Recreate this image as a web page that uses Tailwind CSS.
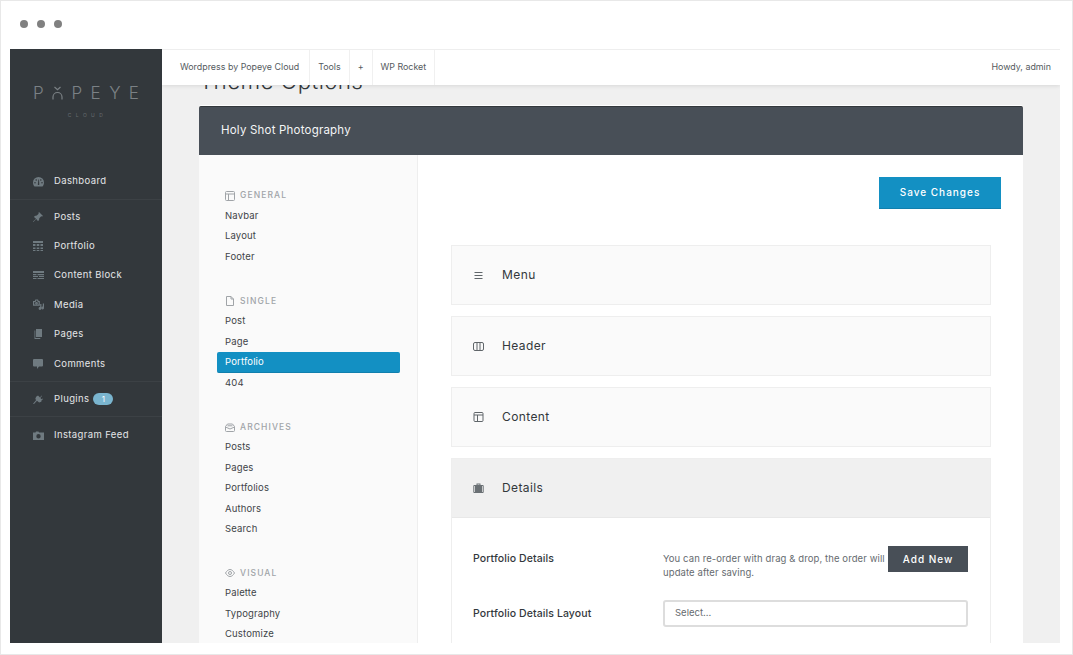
<!DOCTYPE html>
<html lang="en">
<head>
  <meta charset="UTF-8" />
  <title>Theme Options</title>
  <script src="https://cdn.jsdelivr.net/npm/@tailwindcss/browser@4"></script>
</head>
<body class="bg-white font-['Inter',sans-serif] text-[#3a3f44] antialiased">
  <div class="w-[1073px] h-[655px] border border-[#e8e8e8] overflow-hidden flex flex-col">
    <!-- window chrome -->
    <div class="h-[48px] shrink-0 flex items-center gap-[9px] pl-[19px] pb-[3px]">
      <span class="w-2 h-2 rounded-full bg-[#808080]"></span>
      <span class="w-2 h-2 rounded-full bg-[#808080]"></span>
      <span class="w-2 h-2 rounded-full bg-[#808080]"></span>
    </div>

    <div class="ml-[9px] w-[1050px] h-[594px] flex overflow-hidden">
      <!-- sidebar -->
      <aside class="w-[152px] shrink-0 bg-[#33383c] text-[#e4e6e8] text-[9.5px] font-normal tracking-[0.38px]">
        <div class="h-[114px] pt-[37px]">
          <div class="flex justify-between items-center px-[23px] h-[14px] text-[17px] leading-none font-light text-[#7b8185] tracking-normal">
            <span>P</span>
            <svg class="w-[11px] h-[14px]" viewBox="0 0 11 14" fill="none" stroke="#7b8185" stroke-width="1.2"><path d="M2.5 1l3 2.6 3-2.6M1 13.5V11a4.5 4.5 0 0 1 9 0v2.5"/></svg>
            <span>P</span><span>E</span><span>Y</span><span>E</span>
          </div>
          <div class="mt-[12px] text-center text-[5px] leading-[6px] tracking-[4.4px] text-[#666c70] pl-[3px]">CLOUD</div>
        </div>

        <div class="border-b border-[#3c4145] h-[37px] pt-[1px] flex items-center gap-[11px] pl-[23px]">
          <svg class="w-[11px] h-[10px] shrink-0" viewBox="0 0 11 10" fill="#6f7a80"><path fill-rule="evenodd" d="M5.500 0A5.500 5.500 0 0 0 0 5.500c0 1.600.6 3 1.500 4h8c.9-1 1.500-2.400 1.500-4A5.500 5.500 0 0 0 5.500 0zM2 5a.8.8 0 1 1 0 1.600A.8.8 0 0 1 2 5zm1.200-2.800a.8.8 0 1 1 0 1.600.8.8 0 0 1 0-1.600zm4.600 0a.8.8 0 1 1 0 1.600.8.8 0 0 1 0-1.600zM9 5a.8.8 0 1 1 0 1.600A.8.8 0 0 1 9 5zM4.800 7.500l.6-5h.6l.3 5a.8.8 0 0 1-1.500 0z"/></svg>
          <span class="-ml-[1px]">Dashboard</span>
        </div>

        <div class="border-b border-[#3c4145] py-[2px] h-[182px]">
          <div class="h-[29.4px] flex items-center gap-[11px] pl-[23px]">
            <svg class="w-[10px] h-[10px] shrink-0" viewBox="0 0 10 10" fill="#6f7a80"><path d="M6 0l4 4-1 .6-.8-.3L6.300 6.200 6 8.300 4.900 9 3.200 7 .4 10 0 9.600 3 6.800 1 5l.7-1.100 2.100-.3L5.700 1.800 5.400 1z"/></svg>
            <span>Posts</span>
          </div>
          <div class="h-[29.4px] flex items-center gap-[11px] pl-[23px]">
            <svg class="w-[10px] h-[10px] shrink-0" viewBox="0 0 10 10" fill="#6f7a80"><path d="M0 0h10v2H0zM0 3h2.500v2H0zM3.700 3h2.600v2H3.700zM7.500 3H10v2H7.500zM0 6.500h2.500V8H0zM3.700 6.500h2.600V8H3.700zM7.500 6.500H10V8H7.500zM0 9h2.500v1H0zM3.700 9h2.600v1H3.700zM7.500 9H10v1H7.500z"/></svg>
            <span>Portfolio</span>
          </div>
          <div class="h-[29.4px] flex items-center gap-[10px] pl-[23px]">
            <svg class="w-[11px] h-[8px] shrink-0" viewBox="0 0 11 8" fill="#6f7a80"><path d="M0 0h11v2H0zM0 3h3.500v1.200H0zM4.500 3H11v1.200H4.500zM0 5h5v1H0zM6 5h5v1H6zM0 7h3.500v1H0zM4.500 7H11v1H4.500z"/></svg>
            <span>Content Block</span>
          </div>
          <div class="h-[29.4px] flex items-center gap-[10px] pl-[23px]">
            <svg class="w-[11px] h-[11px] shrink-0" viewBox="0 0 11 11" fill="none" stroke="#6f7a80" stroke-width="1.200"><path d="M.6 2.500h1.600l.6-1.500h1.800l.6 1.500h1v3.700H.6z"/><circle cx="3.500" cy="4.300" r=".8"/><path d="M7.800 5v4.300M10.400 4.500v4.300"/><circle cx="7" cy="9.500" r=".8" fill="#6f7a80"/><circle cx="9.600" cy="9" r=".8" fill="#6f7a80"/></svg>
            <span>Media</span>
          </div>
          <div class="h-[29.4px] flex items-center gap-[11px] pl-[23px]">
            <svg class="w-[10px] h-[10px] shrink-0" viewBox="0 0 10 10" fill="#6f7a80"><path d="M3 0h6v8H3zM1.500 1.500h.8V9h5v1H1.500z"/></svg>
            <span>Pages</span>
          </div>
          <div class="h-[29.4px] flex items-center gap-[11px] pl-[23px]">
            <svg class="w-[10px] h-[10px] shrink-0" viewBox="0 0 10 10" fill="#6f7a80"><path d="M1 0h8a1 1 0 0 1 1 1v5.500a1 1 0 0 1-1 1H6L4 10V7.500H1a1 1 0 0 1-1-1V1a1 1 0 0 1 1-1z"/></svg>
            <span>Comments</span>
          </div>
        </div>

        <div class="border-b border-[#3c4145] h-[35px] flex items-center gap-[11px] pl-[23px]">
          <svg class="w-[10px] h-[10px] shrink-0" viewBox="0 0 10 10" fill="#6f7a80"><path d="M5 1.500L7 3.500 8.500 1.500l.4.4L7.400 4l1.200 1.200.9-.6.500.5-1.500 1.300-.2 1.300-2.200.8L4 6.800 1 10l-1-.2L3.200 6l-.9-1 .8-2.200z"/></svg>
          <span>Plugins</span>
          <span class="w-[20px] h-[12px] -ml-[7px] rounded-full bg-[#7ab5cf] text-white text-[8px] leading-[12px] text-center tracking-normal">1</span>
        </div>

        <div class="h-[37px] flex items-center gap-[10px] pl-[23px]">
          <svg class="w-[11px] h-[9px] shrink-0" viewBox="0 0 11 9" fill="#6f7a80"><path fill-rule="evenodd" d="M0 1.500h2.500L3 .5h2.500l.5 1h5V9H0zM5.500 3a2.200 2.200 0 1 0 0 4.400 2.200 2.200 0 0 0 0-4.400z"/></svg>
          <span>Instagram Feed</span>
        </div>
      </aside>

      <!-- main column -->
      <main class="relative flex-1 bg-[#f0f0f0] overflow-hidden pl-[37px] pr-[37px]">
        <!-- top bar lies over the scrolled page -->
        <div class="absolute top-0 left-0 right-0 z-10 h-[36px] bg-white border-t border-[#eeeeee] shadow-[0_1px_4px_rgba(0,0,0,0.10)] flex items-stretch text-[8.9px] text-[#555a5e]">
          <div class="flex items-center pb-[2px] pl-[18px] pr-[10px] border-r border-[#f0f0f0]">Wordpress by Popeye Cloud</div>
          <div class="flex items-center pb-[2px] px-[8px] border-r border-[#f0f0f0]">Tools</div>
          <div class="flex items-center pb-[2px] px-[8px] border-r border-[#f0f0f0]">+</div>
          <div class="flex items-center pb-[2px] px-[8px] border-r border-[#f0f0f0]">WP Rocket</div>
          <div class="ml-auto flex items-center pb-[2px] pr-[9px]">Howdy, admin</div>
        </div>

        <h1 class="h-[57px] pt-[17px] text-[22.5px] leading-[30px] font-light text-[#33383c] tracking-[0.3px]">Theme Options</h1>

        <section class="w-[824px]">
          <header class="h-[49px] pb-[1px] bg-[#484f57] rounded-t-[2px] border-t border-[#33383c] shadow-[0_-1px_0_#ffffff] flex items-center pl-[22px] text-[#f4f5f6] text-[11.5px] tracking-[0.2px]">Holy Shot Photography</header>

          <div class="flex h-[488px] bg-white overflow-hidden">
            <!-- options nav -->
            <nav class="w-[219px] shrink-0 bg-[#fafafa] border-r border-[#eeeeee] pt-[30.5px] pl-[18px] pr-[17px] text-[9.5px] text-[#3f4448] tracking-[0.15px]">
              <div class="h-[20px] pl-[8px] flex items-center gap-[5px] text-[8.5px] font-medium tracking-[1.1px] text-[#a0a4a8]">
                <svg class="w-[10px] h-[10px] shrink-0" viewBox="0 0 10 10" fill="none" stroke="#a0a4a8"><rect x=".5" y=".5" width="9" height="9" rx="1"/><path d="M.5 3h9M3.500 3v6.500"/></svg>
                GENERAL
              </div>
              <div class="h-[20.5px] pl-[8px] leading-[20.500px]">Navbar</div>
              <div class="h-[20.5px] pl-[8px] leading-[20.500px]">Layout</div>
              <div class="h-[20.5px] pl-[8px] leading-[20.500px]">Footer</div>

              <div class="mt-[24px] h-[20px] pl-[8px] flex items-center gap-[5px] text-[8.5px] font-medium tracking-[1.1px] text-[#a0a4a8]">
                <svg class="w-[10px] h-[10px] shrink-0" viewBox="0 0 10 10" fill="none" stroke="#a0a4a8"><path d="M1.500.5h4.500l2.500 2.500v6.500h-7zM6 .5V3h2.500"/></svg>
                SINGLE
              </div>
              <div class="h-[20.5px] pl-[8px] leading-[20.500px]">Post</div>
              <div class="h-[20.5px] pl-[8px] leading-[20.500px]">Page</div>
              <div class="h-[20.5px] pl-[8px] leading-[20.500px] bg-[#1390c3] border-b border-[#107fad] rounded-[2px] text-white">Portfolio</div>
              <div class="h-[20.5px] pl-[8px] leading-[20.500px]">404</div>

              <div class="mt-[24px] h-[20px] pl-[8px] flex items-center gap-[5px] text-[8.5px] font-medium tracking-[1.1px] text-[#a0a4a8]">
                <svg class="w-[10px] h-[9px] shrink-0" viewBox="0 0 10 9" fill="none" stroke="#a0a4a8"><path d="M.5 3.500L2.500 1h5l2 2.500v4a1 1 0 0 1-1 1h-7a1 1 0 0 1-1-1zM.5 4L5 6l4.500-2M2.500 2.800h5"/></svg>
                ARCHIVES
              </div>
              <div class="h-[20.5px] pl-[8px] leading-[20.500px]">Posts</div>
              <div class="h-[20.5px] pl-[8px] leading-[20.500px]">Pages</div>
              <div class="h-[20.5px] pl-[8px] leading-[20.500px]">Portfolios</div>
              <div class="h-[20.5px] pl-[8px] leading-[20.500px]">Authors</div>
              <div class="h-[20.5px] pl-[8px] leading-[20.500px]">Search</div>

              <div class="mt-[23.500px] h-[20px] pl-[8px] flex items-center gap-[5px] text-[8.5px] font-medium tracking-[1.1px] text-[#a0a4a8]">
                <svg class="w-[10px] h-[8px] shrink-0" viewBox="0 0 10 8" fill="none" stroke="#a0a4a8"><path d="M.5 4C2 1.500 3.500.5 5 .5S8 1.500 9.500 4C8 6.500 6.500 7.500 5 7.500S2 6.500.5 4z"/><circle cx="5" cy="4" r="1.500"/></svg>
                VISUAL
              </div>
              <div class="h-[20.5px] pl-[8px] leading-[20.500px]">Palette</div>
              <div class="h-[20.5px] pl-[8px] leading-[20.500px]">Typography</div>
              <div class="h-[20.5px] pl-[8px] leading-[20.500px]">Customize</div>
            </nav>

            <!-- options content -->
            <div class="flex-1 pt-[22px] pl-[33px] pr-[22px]">
              <div class="flex justify-end">
                <button class="w-[122px] h-[32px] bg-[#1390c3] border-b border-[#107fad] text-white text-[10px] font-medium tracking-[1px]">Save Changes</button>
              </div>

              <div class="mt-[36px] w-[540px] flex flex-col gap-[11px]">
                <div class="h-[60px] bg-[#fafafa] border border-[#eeeeee] flex items-center gap-[18px] pl-[21px] text-[12px] tracking-[0.4px] text-[#33383c]">
                  <svg class="w-[11px] h-[9px] shrink-0" viewBox="0 0 11 9" fill="none" stroke="#60666a"><path d="M1.500 1.500h8M1.500 4.500h8M1.500 7.500h8"/></svg>
                  Menu
                </div>
                <div class="h-[60px] bg-[#fafafa] border border-[#eeeeee] flex items-center gap-[18px] pl-[21px] text-[12px] tracking-[0.4px] text-[#33383c]">
                  <svg class="w-[11px] h-[9px] shrink-0" viewBox="0 0 11 9" fill="none" stroke="#60666a"><rect x=".5" y=".5" width="10" height="8" rx="1.500"/><path d="M4 .5v8M7 .5v8"/></svg>
                  Header
                </div>
                <div class="h-[60px] bg-[#fafafa] border border-[#eeeeee] flex items-center gap-[18px] pl-[21px] text-[12px] tracking-[0.4px] text-[#33383c]">
                  <svg class="w-[11px] h-[10px] shrink-0" viewBox="0 0 11 10" fill="none" stroke="#60666a"><rect x="1" y=".5" width="9" height="9" rx="1"/><path d="M1 3h9M4.500 3v6.500"/></svg>
                  Content
                </div>
                <div class="border border-[#eeeeee] h-[300px]">
                  <div class="h-[59px] bg-[#f0f0f0] border-b border-[#e8e8e8] flex items-center gap-[18px] pl-[21px] text-[12px] tracking-[0.4px] text-[#33383c]">
                    <svg class="w-[11px] h-[10px] shrink-0" viewBox="0 0 11 10" fill="#6a7074"><path fill-rule="evenodd" d="M3.500 2V.5h4V2h2.200a1 1 0 0 1 1 1v6a1 1 0 0 1-1 1H1.300a1 1 0 0 1-1-1V3a1 1 0 0 1 1-1zm1-.5V2h2v-.5zM2 3H1.300v6H2zm7 0v6h.7V3z"/></svg>
                    Details
                  </div>
                  <div class="flex pt-[28px] pl-[21px] pr-[22px] h-[55px]">
                    <div class="w-[190px] pt-[6px] text-[10.5px] leading-[14px] font-medium text-[#33383c] tracking-[0.1px]">Portfolio Details</div>
                    <div class="w-[225px] shrink-0 pt-[6px] text-[9.5px] leading-[14px] text-[#666b6f] tracking-[0.1px]">You can re-order with drag &amp; drop, the order will update after saving.</div>
                    <button class="w-[80px] h-[26px] bg-[#484f57] text-white text-[10px] font-medium tracking-[1px] shrink-0">Add New</button>
                  </div>
                  <div class="flex mt-[27px] pl-[21px] pr-[22px] items-center">
                    <div class="w-[190px] text-[10.5px] font-medium text-[#33383c] tracking-[0.1px]">Portfolio Details Layout</div>
                    <div class="w-[305px] h-[27px] bg-white border-2 border-[#dddddd] rounded-[3px] flex items-center pl-[10px] text-[9.5px] text-[#666b6f]">Select...</div>
                  </div>
                </div>
              </div>
            </div>
          </div>
        </section>
      </main>
    </div>
  </div>
</body>
</html>
